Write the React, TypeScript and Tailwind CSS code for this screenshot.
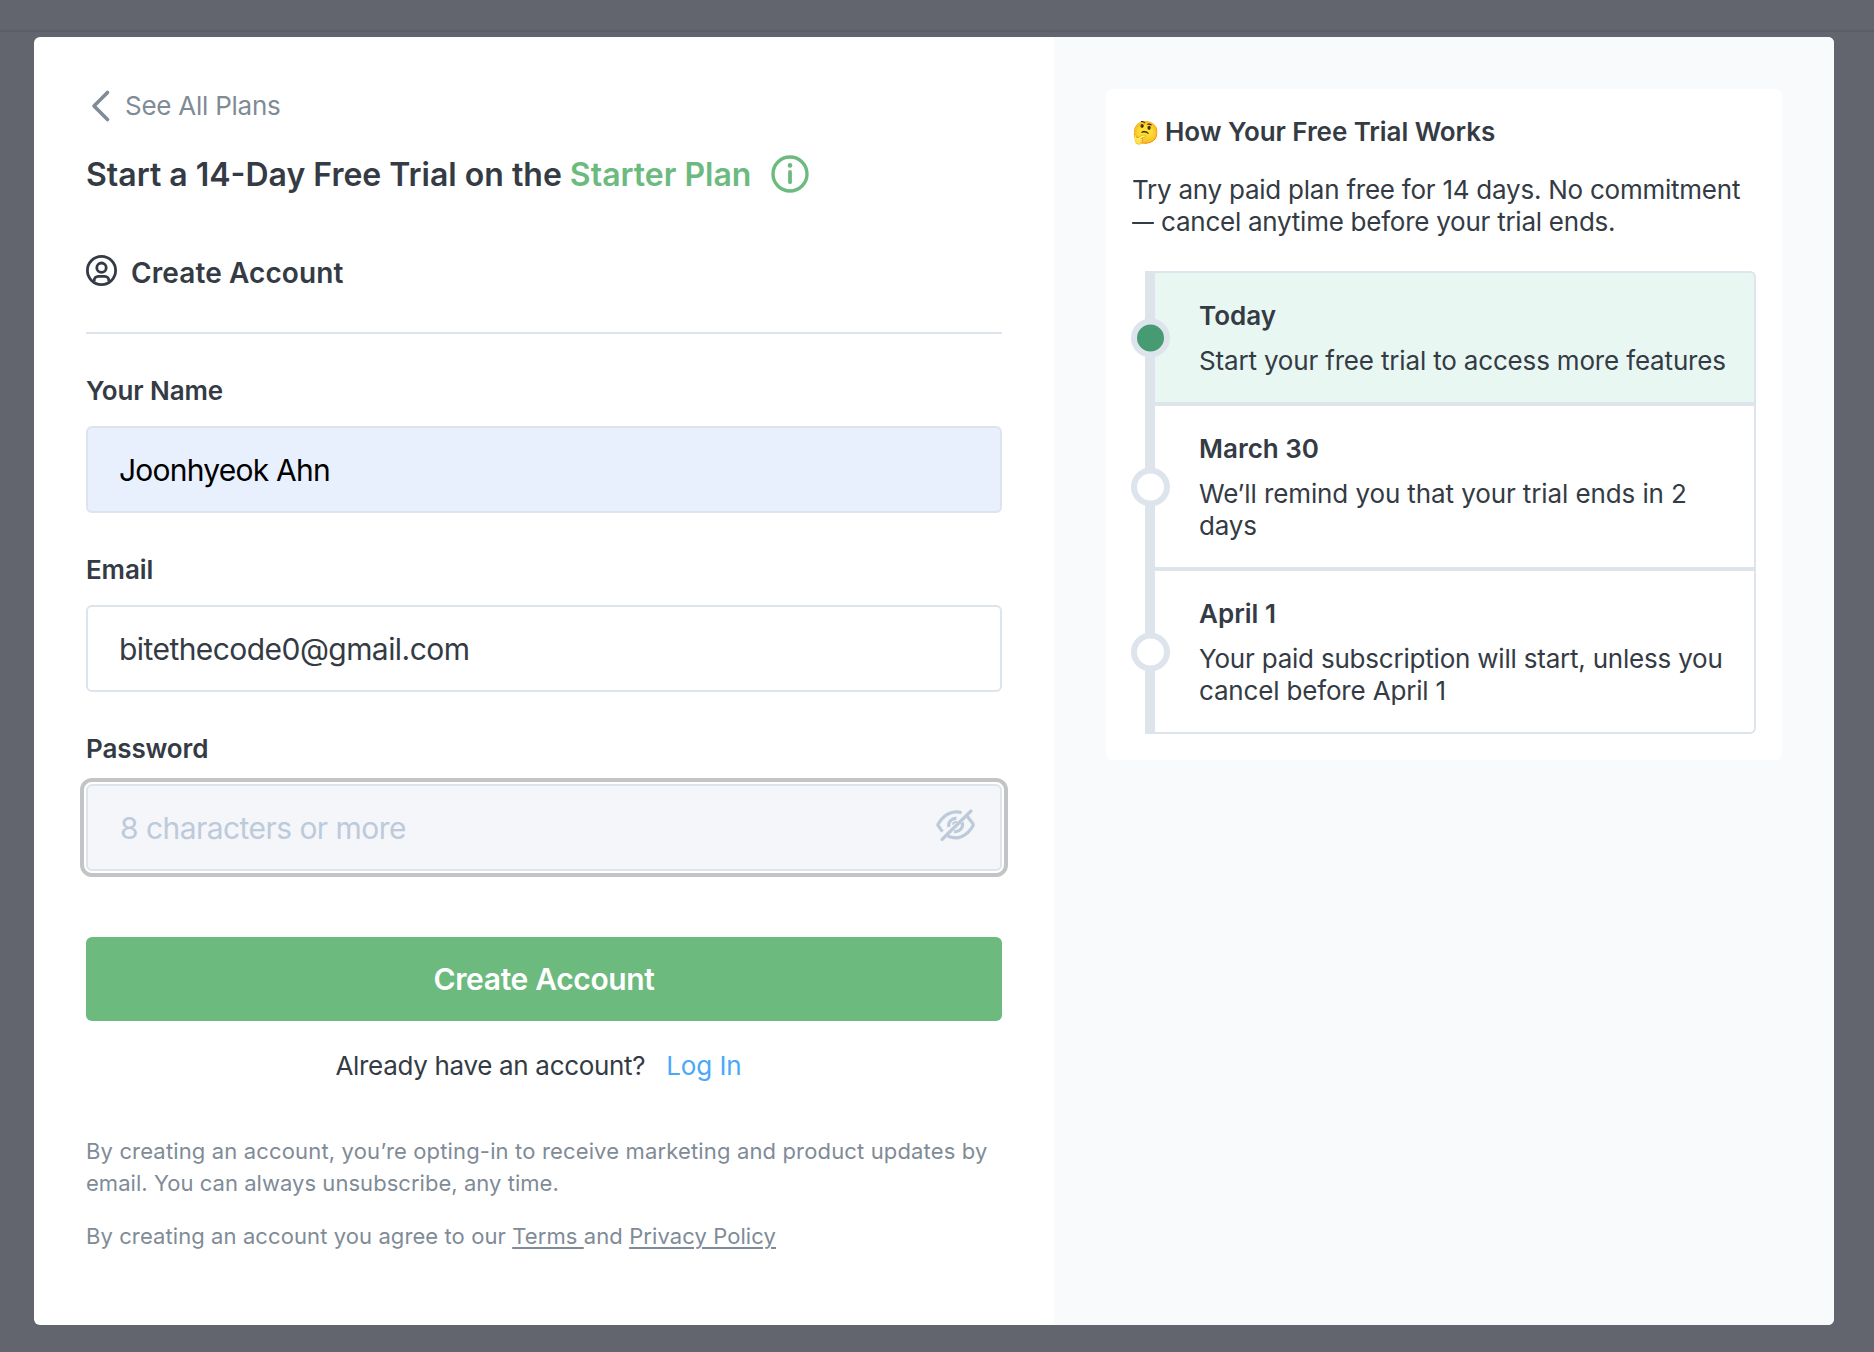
import type { ReactNode } from "react";

function ChevronLeftIcon() {
  return (
    <svg className="h-[34px] w-[39px] shrink-0" viewBox="0 0 39 34" fill="none">
      <path d="M21.500 3.500 8 17l13.500 13.500" stroke="#7f8b97" strokeWidth="3.600" strokeLinecap="round" strokeLinejoin="round" />
    </svg>
  );
}

function InfoIcon() {
  return (
    <svg className="h-[38px] w-[38px] shrink-0" viewBox="0 0 38 38" fill="none">
      <circle cx="19" cy="19" r="17" stroke="#6dba7f" strokeWidth="3.4" />
      <circle cx="19" cy="10.4" r="2.3" fill="#6dba7f" />
      <path d="M19 17v10.200" stroke="#6dba7f" strokeWidth="3.8" strokeLinecap="round" />
    </svg>
  );
}

function UserCircleIcon() {
  return (
    <svg className="h-[31px] w-[31px] shrink-0" viewBox="0 0 31 31" fill="none" stroke="#343b44" strokeWidth="2.8">
      <circle cx="15.5" cy="15.5" r="14.1" />
      <circle cx="15.5" cy="12.7" r="4.7" />
      <path d="M8.200 26.500v-1.200a4 4 0 0 1 4-4h6.600a4 4 0 0 1 4 4v1.200" />
    </svg>
  );
}

function EyeOffIcon() {
  return (
    <svg
      className="h-[34px] w-[40px] shrink-0"
      viewBox="0 0 40 34"
      fill="none"
      stroke="#bdcada"
      strokeWidth="3.2"
      strokeLinecap="round"
      strokeLinejoin="round"
    >
      <path d="M35 3 6 31.500" />
      <path d="M25.500 4.700C17.500 2.300 8.500 5.500 2.200 15.800a1.900 1.900 0 0 0 0 2l4.300 5.800" strokeLinecap="butt" />
      <path d="M31.800 9l5.200 6.800a1.900 1.900 0 0 1 0 2C31 28.500 21.500 32 12.800 28.600" />
      <path d="M20.500 10.400a7 7 0 0 0-7.600 8.600" strokeLinecap="butt" />
      <path d="M26.200 14.500a7 7 0 0 1-8 9" strokeLinecap="butt" />
      <path d="M21 14.200a3.200 3.200 0 0 0-4.200 2.500" strokeWidth="2" strokeLinecap="butt" />
    </svg>
  );
}

function Label({ children }: { children: ReactNode }) {
  return <div className="mt-[41px] text-[26px] leading-8 font-semibold tracking-[-0.12px]">{children}</div>;
}

type StepProps = { title: string; active?: boolean; children: ReactNode };

function Step({ title, active, children }: StepProps) {
  return (
    <li
      className={
        "relative border-y-2 border-r-2 border-l-10 border-[#dde4ec] pt-[27px] pb-[25px] pl-[44px] first:rounded-tr-md last:rounded-br-md " +
        (active ? "bg-[#e8f7f2]" : "bg-white")
      }
    >
      <span
        className={
          "absolute top-1/2 -left-[24px] size-[39px] -translate-y-1/2 rounded-full border-6 border-[#dde4ec] " +
          (active ? "bg-[#479b72]" : "bg-white")
        }
      />
      <h3 className="text-[26px] leading-8 font-semibold">{title}</h3>
      <p className="mt-[13px] text-[26px] leading-8 tracking-[-0.17px] whitespace-nowrap">{children}</p>
    </li>
  );
}

export default function App() {
  return (
    <div className="h-[1352px] w-[1874px] overflow-hidden bg-[#62656e] font-['Inter',sans-serif] text-[#343b44] antialiased">
      <div className="h-8 border-b-2 border-[#5b5e66]" />
      <div className="mt-[5px] ml-[34px] flex h-[1288px] w-[1800px] overflow-hidden rounded-md bg-white">
        <main className="w-[1020px] px-[52px] pt-[52px]">
          <a className="flex h-[34px] items-center text-[26px] leading-[34px] tracking-[-0.25px] text-[#7f8b97]">
            <ChevronLeftIcon />
            See All Plans
          </a>

          <h1 className="mt-[31px] flex h-10 items-center text-[32px] font-semibold whitespace-pre">
            <span className="pt-0.5 leading-10">
              Start a 14-Day Free Trial on the <span className="text-[#6dba7f]">Starter Plan</span>
            </span>
            <span className="ml-5">
              <InfoIcon />
            </span>
          </h1>

          <h2 className="mt-[62px] flex h-[34px] items-start gap-[14px] text-[28px] leading-[34px] font-semibold tracking-[0.1px]">
            <span className="-mt-px">
              <UserCircleIcon />
            </span>
            Create Account
          </h2>
          <div className="mt-[42px] w-[916px] border-t-2 border-[#dde4ec]" />

          <Label>Your Name</Label>
          <div className="mt-[19px] flex h-[87px] w-[916px] items-center rounded-md border-2 border-[#dde4ec] bg-[#e8effd] pt-px pl-[31px] text-[30px] tracking-[-0.77px] text-black">
            Joonhyeok Ahn
          </div>

          <Label>Email</Label>
          <div className="mt-[19px] flex h-[87px] w-[916px] items-center rounded-md border-2 border-[#dde4ec] bg-white pt-px pl-[31px] text-[30px] tracking-[-0.56px]">
            bitethecode0@gmail.com
          </div>

          <Label>Password</Label>
          <div className="mt-[19px] flex h-[87px] w-[916px] items-center justify-between rounded-md border-2 border-[#dde4ec] bg-[#f4f6fa] pt-px pr-[24px] pl-[32px] text-[30px] tracking-[-0.55px] text-[#bdcada] outline-4 outline-offset-2 outline-[#c3c4c5]">
            8 characters or more
            <span className="-mt-[6px]">
              <EyeOffIcon />
            </span>
          </div>

          <button className="mt-[66px] flex h-[84px] w-[916px] items-center justify-center rounded-md bg-[#6dba7f] text-[30px] font-semibold tracking-[-0.36px] text-white">
            Create Account
          </button>

          <p className="mt-[29px] flex w-[916px] justify-center gap-[21px] pr-[11px] text-[26px] leading-8 tracking-[-0.32px]">
            <span>Already have an account?</span>
            <a className="tracking-[-0.1px] text-[#4aa8fa]">Log In</a>
          </p>

          <p className="mt-[53px] text-[22px] leading-8 whitespace-nowrap text-[#7f8b97]">
            <span className="tracking-[0.15px]">
              By creating an account, you’re opting-in to receive marketing and product updates by
            </span>
            <br />
            <span className="tracking-[0.04px]">email. You can always unsubscribe, any time.</span>
          </p>
          <p className="mt-[21px] text-[22px] leading-8 tracking-[0.09px] whitespace-nowrap text-[#7f8b97]">
            By creating an account you agree to our{" "}
            <a className="underline decoration-2 underline-offset-[3px]">Terms </a>and{" "}
            <a className="underline decoration-2 underline-offset-[3px]">Privacy Policy</a>
          </p>
        </main>

        <aside className="flex-1 bg-[#f9fafc] p-[52px]">
          <section className="h-[671px] w-[676px] rounded-md bg-white px-[26px] pt-[27px]">
            <h2 className="flex h-8 items-center text-[26px] leading-8 font-semibold tracking-[-0.06px]">
              <span className="w-[33px] text-[22px] leading-8">🤔</span>
              How Your Free Trial Works
            </h2>
            <p className="mt-[26px] text-[26px] leading-8 whitespace-nowrap">
              <span className="tracking-[-0.24px]">Try any paid plan free for 14 days. No commitment</span>
              <br />
              <span className="inline-block w-[22px] origin-left scale-x-[0.84]">—</span>
              <span className="tracking-[-0.25px]"> cancel anytime before your trial ends.</span>
            </p>
            <ol className="mt-[33px] ml-[13px] w-[611px]">
              <Step title="Today" active>
                Start your free trial to access more features
              </Step>
              <Step title="March 30">
                <span className="tracking-[-0.1px]">We’ll remind you that your trial ends in 2</span>
                <br />
                days
              </Step>
              <Step title="April 1">
                <span className="tracking-[-0.21px]">Your paid subscription will start, unless you</span>
                <br />
                cancel before April 1
              </Step>
            </ol>
          </section>
        </aside>
      </div>
    </div>
  );
}
